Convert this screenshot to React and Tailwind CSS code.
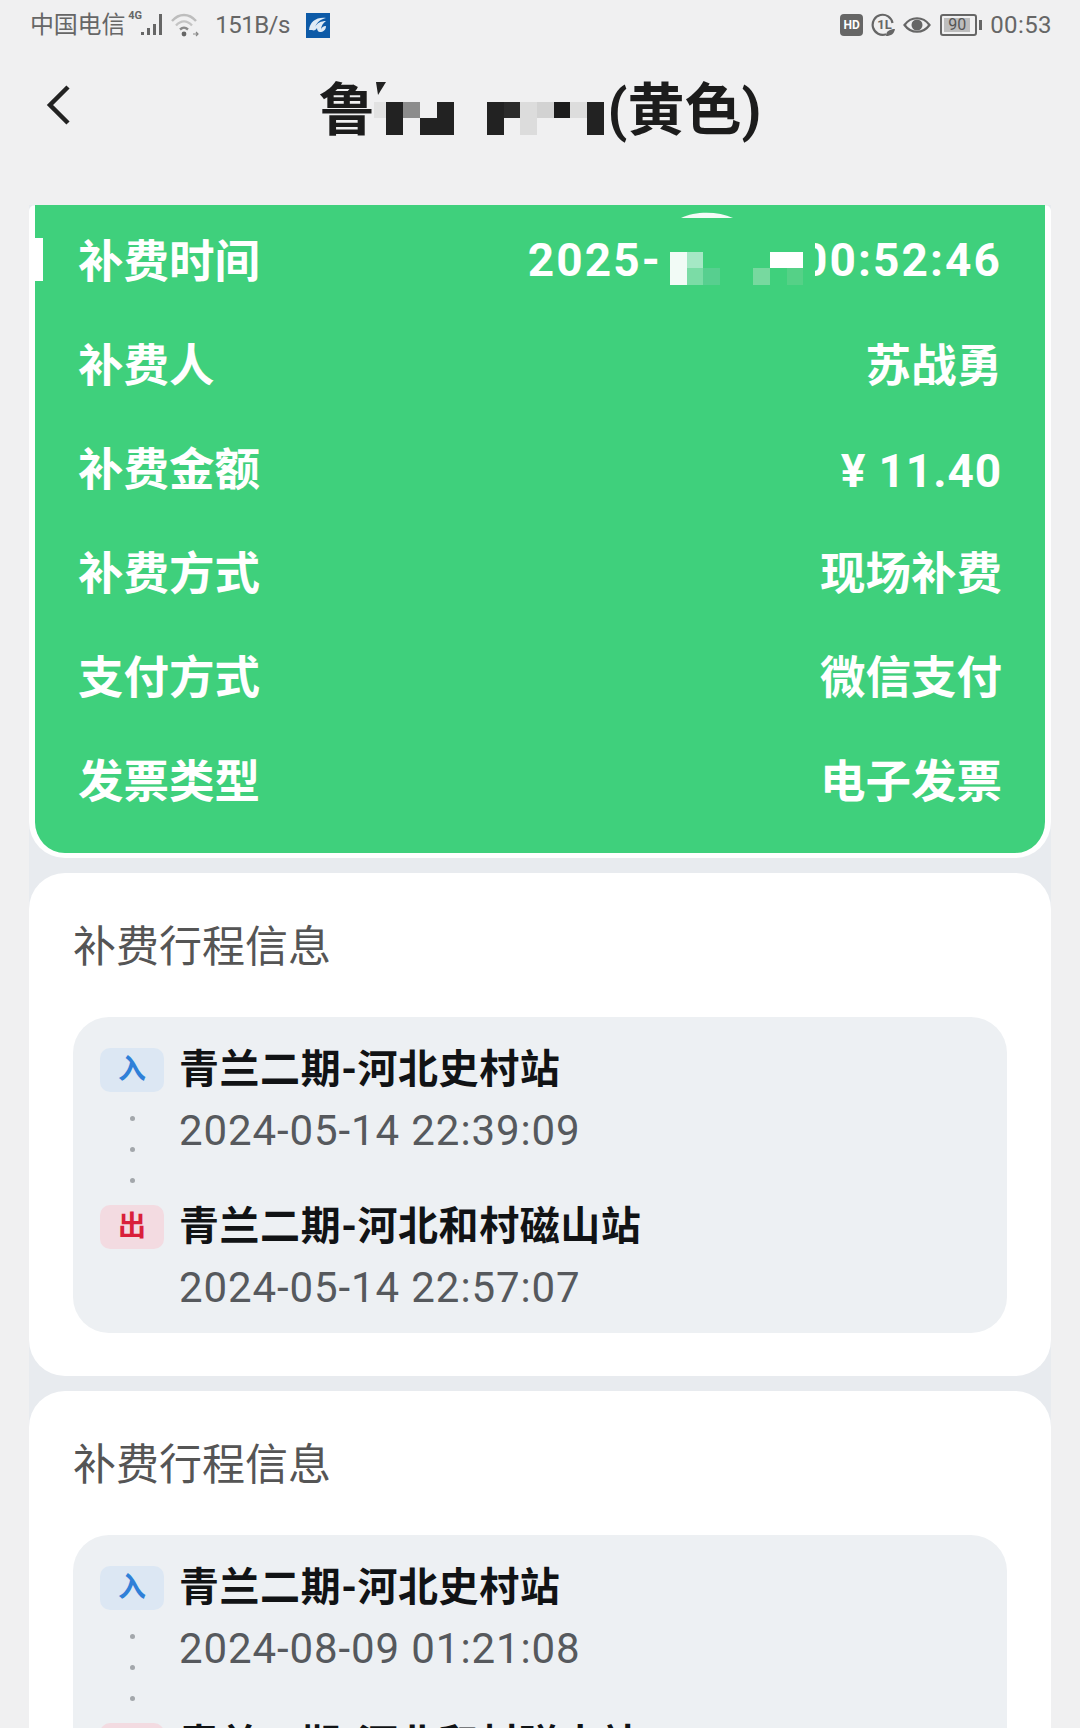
import React from "react";

const font = { fontFamily: 'Roboto, "Noto Sans CJK SC", sans-serif' };

function Px({ x, y, w = 16, h = 16, c }) {
  return <i className="absolute block" style={{ left: x, top: y, width: w, height: h, background: c }} />;
}

function TitleMosaic() {
  const d = "#222222";
  return (
    <span className="relative inline-block w-[232px] h-[52px] align-[-6px]">
      <Px x={-2} y={18} w={14} h={16} c="#e2e2e2" />
      <Px x={10} y={18} w={17} h={33} c={d} />
      <Px x={27} y={18} w={17} h={16} c="#8c8c8c" />
      <Px x={44} y={34} w={34} h={17} c={d} />
      <Px x={61} y={18} w={17} h={17} c={d} />
      <Px x={111} y={18} w={17} h={33} c={d} />
      <Px x={128} y={18} w={16} h={16} c="#2b2b2b" />
      <Px x={144} y={18} w={17} h={33} c="#dcdcdc" />
      <Px x={161} y={18} w={17} h={16} c="#d2d2d2" />
      <Px x={178} y={18} w={16} h={16} c="#1c1c1c" />
      <Px x={194} y={18} w={17} h={16} c="#dddddd" />
      <Px x={211} y={18} w={17} h={33} c="#222222" />
      <svg className="absolute left-[-1px] top-[-4px]" width="12" height="16" viewBox="0 0 12 16">
        <path d="M1 2h10L3 15z" fill="#222" />
      </svg>
    </span>
  );
}

function DateMosaic() {
  return (
    <span className="relative inline-block w-[153px] h-[40px] shrink-0 z-10">
      <i className="absolute block left-0 top-[-6px] w-[153px] h-[52px] bg-[#3fd07c]" />
      <Px x={8} y={12} w={17} h={33} c="#f2fbf6" />
      <Px x={25} y={12} w={16} h={16} c="#a5e8c5" />
      <Px x={25} y={28} w={16} h={17} c="#7bdca6" />
      <Px x={41} y={28} w={17} h={17} c="#57cf8f" />
      <Px x={91} y={28} w={17} h={17} c="#77d99f" />
      <Px x={108} y={12} w={33} h={16} c="#ffffff" />
      <Px x={125} y={28} w={16} h={17} c="#55d187" />
    </span>
  );
}

function Row({ label, children }) {
  return (
    <div className="flex h-[104px] items-center justify-between text-white font-bold text-[45.5px] leading-none">
      <span>{label}</span>
      {children}
    </div>
  );
}

function Trip({ inName, inTime, outName, outTime }) {
  return (
    <div className="mt-[40px] rounded-[36px] bg-[#edf0f3] pt-[23px] pb-[14px] pl-[27px]">
      <div className="flex h-[157px] gap-[15px]">
        <div className="flex w-[64px] flex-col items-center pt-[8px]">
          <div className="flex h-[44px] w-[64px] items-center justify-center rounded-[10px] bg-[#dce7f3] text-[28px] font-bold leading-none text-[#2f80d8]">入</div>
          <div className="mt-[24px] flex flex-col gap-[26px]">
            <i className="block h-[5px] w-[5px] rounded-full bg-[#a3a7ab]" />
            <i className="block h-[5px] w-[5px] rounded-full bg-[#a3a7ab]" />
            <i className="block h-[5px] w-[5px] rounded-full bg-[#a3a7ab]" />
          </div>
        </div>
        <div>
          <div className="flex h-[60px] items-center text-[40px] font-bold leading-none tracking-[0.55px] text-[#111315]">{inName}</div>
          <div className="flex h-[62px] items-center text-[42px] leading-none tracking-[0.9px] text-[#56595d]">{inTime}</div>
        </div>
      </div>
      <div className="flex h-[122px] gap-[15px]">
        <div className="flex w-[64px] flex-col items-center pt-[8px]">
          <div className="flex h-[44px] w-[64px] items-center justify-center rounded-[10px] bg-[#f3dbe1] text-[28px] font-bold leading-none text-[#d9203a]">出</div>
        </div>
        <div>
          <div className="flex h-[60px] items-center text-[40px] font-bold leading-none tracking-[0.55px] text-[#111315]">{outName}</div>
          <div className="flex h-[62px] items-center text-[42px] leading-none tracking-[0.9px] text-[#56595d]">{outTime}</div>
        </div>
      </div>
    </div>
  );
}

function TripCard(props) {
  return (
    <div className="mt-[15px] rounded-[36px] bg-white px-[44px] pt-[44px] pb-[43px]">
      <div className="flex h-[60px] items-center text-[43px] leading-none text-[#555555]">补费行程信息</div>
      <Trip {...props} />
    </div>
  );
}

export default function App() {
  return (
    <div className="relative h-[1728px] w-[1080px] overflow-hidden bg-[#f0f0f1]" style={font}>
      {/* status bar */}
      <div className="flex h-[50px] items-center justify-between pl-[30px] pr-[28px] text-[24px] leading-none text-[#666666]">
        <div className="flex items-center">
          <span className="tracking-[-0.2px]">中国电信</span>
          <span className="relative ml-[3px] block h-[26px] w-[40px]">
            <span className="absolute left-0 top-[-2px] text-[11px] font-bold leading-none">4G</span>
            <svg className="absolute left-0 top-0" width="40" height="26" viewBox="0 0 40 26">
              <rect x="13" y="20" width="3" height="3" fill="#666" />
              <rect x="19" y="16" width="3" height="7" fill="#666" />
              <rect x="25" y="12" width="3" height="11" fill="#666" />
              <rect x="31" y="2" width="3" height="21" fill="#666" />
            </svg>
          </span>
          <svg className="ml-[2px]" width="30" height="26" viewBox="0 0 30 26" fill="none">
            <path d="M2 9C9 1 19 1 26 9" stroke="#bdbdbd" strokeWidth="2.4" />
            <path d="M6 13.5C11 8 17 8 22 13.5" stroke="#c4c4c4" strokeWidth="2.4" />
            <path d="M10 17.5c3-2.6 5-2.6 8 0" stroke="#8a8a8a" strokeWidth="2.4" />
            <circle cx="14" cy="22" r="2.4" fill="#666" />
            <path d="M23 22h5M26 20l2 2-2 2" stroke="#888" strokeWidth="1.2" />
          </svg>
          <span className="ml-[15px] tracking-[-0.5px]">151B/s</span>
          <svg className="ml-[16px]" width="24" height="25" viewBox="0 0 24 25">
            <rect width="24" height="25" fill="#0d5aa7" />
            <path d="M3 17C4 9 10 4 20 5c-5 1-9 4-11 9 2-4 6-6 11-6-3 2-5 5-5 9 0-2 2-4 5-4 0 4-3 6-6 6-2 0-3-2-3-4-1 2-3 3-5 2z" fill="#dfeaf5" />
          </svg>
        </div>
        <div className="flex items-center">
          <span className="flex h-[22px] w-[23px] items-center justify-center rounded-[4px] bg-[#666666] text-[12px] font-bold leading-none text-white">HD</span>
          <span className="relative ml-[8px] block h-[24px] w-[25px]">
            <svg className="absolute left-0 top-0" width="25" height="24" viewBox="0 0 25 24" fill="none">
              <path d="M15 21.2A10 10 0 1 1 21.5 10" stroke="#666" strokeWidth="2.2" />
              <path d="M15 23c0-5 4-7 9-7-1 5-4 7-9 7z" fill="#666" />
            </svg>
            <span className="absolute left-[6px] top-[5px] text-[13px] font-bold leading-none">1L</span>
          </span>
          <svg className="ml-[7px]" width="28" height="20" viewBox="0 0 28 20" fill="none">
            <path d="M1.5 10C8 1 20 1 26.5 10 20 19 8 19 1.5 10z" stroke="#666" strokeWidth="2.2" />
            <circle cx="14" cy="10" r="5.5" fill="#666" />
          </svg>
          <span className="ml-[9px] flex h-[22px] w-[37px] items-center rounded-[3px] border-2 border-[#666666] p-[2px]">
            <span className="flex h-full w-[90%] items-center justify-center bg-[#bdbdbd] text-[16px] leading-none text-[#555555]">90</span>
          </span>
          <i className="ml-[2px] block h-[10px] w-[3px] bg-[#666666]" />
          <span className="ml-[8px] tracking-[0.4px]">00:53</span>
        </div>
      </div>

      {/* nav */}
      <div className="relative flex h-[120px] items-center justify-center">
        <svg className="absolute left-[44px] top-[34px]" width="28" height="44" viewBox="0 0 28 44" fill="none">
          <path d="M24 3L6 21l18 18" stroke="#222" strokeWidth="4.5" />
        </svg>
        <div className="whitespace-nowrap text-[57px] font-bold leading-none text-[#1c1c1c]">
          鲁<TitleMosaic />(黄色)
        </div>
      </div>

      {/* content */}
      <div className="mx-[29px] mt-[35px] bg-[#e8ebef]">
        <div className="relative rounded-t-[6px] rounded-b-[36px] border-x-[6px] border-b-[5px] border-white bg-[#3fd07c] pl-[43px] pr-[43px] pt-[6px] pb-[18px]">
          <i className="absolute left-0 top-[33px] block h-[43px] w-[8px] bg-white" />
          <svg className="absolute left-[645px] top-[6px]" width="54" height="8" viewBox="0 0 54 8">
            <path d="M1 7C15 0 38 0 53 7z" fill="#f4fbf7" />
          </svg>
          <Row label="补费时间">
            <span className="mb-[6px] flex items-center text-[46px] tracking-[2.1px]">
              <span>2025-</span>
              <DateMosaic />
              <span className="ml-[-14px]">00:52:46</span>
            </span>
          </Row>
          <Row label="补费人"><span>苏战勇</span></Row>
          <Row label="补费金额"><span className="text-[46px] tracking-[0.9px]">¥ 11.40</span></Row>
          <Row label="补费方式"><span>现场补费</span></Row>
          <Row label="支付方式"><span>微信支付</span></Row>
          <Row label="发票类型"><span>电子发票</span></Row>
        </div>
        <TripCard inName="青兰二期-河北史村站" inTime="2024-05-14 22:39:09" outName="青兰二期-河北和村磁山站" outTime="2024-05-14 22:57:07" />
        <TripCard inName="青兰二期-河北史村站" inTime="2024-08-09 01:21:08" outName="青兰二期-河北和村磁山站" outTime="2024-08-09 01:39:11" />
      </div>
    </div>
  );
}
